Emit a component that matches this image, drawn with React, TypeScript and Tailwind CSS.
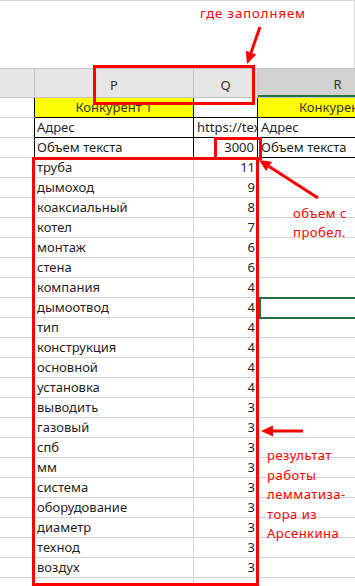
import React from 'react';

const words: [string, number][] = [
  ['труба', 11],
  ['дымоход', 9],
  ['коаксиальный', 8],
  ['котел', 7],
  ['монтаж', 6],
  ['стена', 6],
  ['компания', 4],
  ['дымоотвод', 4],
  ['тип', 4],
  ['конструкция', 4],
  ['основной', 4],
  ['установка', 4],
  ['выводить', 3],
  ['газовый', 3],
  ['спб', 3],
  ['мм', 3],
  ['система', 3],
  ['оборудование', 3],
  ['диаметр', 3],
  ['технод', 3],
  ['воздух', 3],
];

function Arrow({ x1, y1, x2, y2 }: { x1: number; y1: number; x2: number; y2: number }) {
  const dx = x2 - x1;
  const dy = y2 - y1;
  const len = Math.hypot(dx, dy);
  const ux = dx / len;
  const uy = dy / len;
  const bx = x2 - ux * 12;
  const by = y2 - uy * 12;
  const px = -uy * 5.5;
  const py = ux * 5.5;
  return (
    <g>
      <line x1={x1} y1={y1} x2={bx} y2={by} stroke="#ff0000" strokeWidth={3} />
      <polygon points={`${x2},${y2} ${bx + px},${by + py} ${bx - px},${by - py}`} fill="#ff0000" />
    </g>
  );
}

export default function App() {
  return (
    <div
      className="relative w-[355px] h-[586px] overflow-hidden bg-white text-[13px] text-[#1f1f1f]"
      style={{ fontFamily: '"Noto Sans", "Open Sans", sans-serif' }}
    >
      {/* верхняя область над заголовками */}
      <div className="h-[68px] border-t border-r border-[#d9d9d9] bg-[#fefefe]" />

      {/* заголовки столбцов */}
      <div className="flex h-[30px] border-t border-b border-[#c4c4c4] bg-[#e6e6e6] text-[#333]">
        <div className="w-[35px] shrink-0 border-r border-[#c4c4c4]" />
        <div className="w-[159px] shrink-0 border-r border-[#c4c4c4] flex items-end justify-center pb-[2px]">P</div>
        <div className="w-[64px] shrink-0 border-r border-[#c4c4c4] flex items-end justify-center pb-[2px]">Q</div>
        <div className="w-[159px] shrink-0 bg-[#d2d2d2] border-b-2 border-[#217346] flex items-end justify-center pb-[1px]">R</div>
      </div>

      {/* шапка конкурентов */}
      <div className="flex h-[20px]">
        <div className="w-[35px] shrink-0 border-b border-[#d4d4d4] border-r border-r-black" />
        <div className="w-[159px] shrink-0 bg-[#ffff00] border-b border-r border-black flex items-center justify-center text-[#333] leading-none">
          Конкурент 1
        </div>
        <div className="w-[64px] shrink-0 border-b border-r border-black" />
        <div className="w-[159px] shrink-0 bg-[#ffff00] border-b border-black flex items-center justify-center text-[#333] leading-none whitespace-nowrap">
          Конкурент 2
        </div>
      </div>
      <div className="flex h-[20px]">
        <div className="w-[35px] shrink-0 border-b border-[#d4d4d4] border-r border-r-black" />
        <div className="w-[159px] shrink-0 border-b border-r border-black flex items-center pl-[2px] leading-none">Адрес</div>
        <div className="w-[64px] shrink-0 border-b border-r border-black flex items-center pl-[3px] leading-none overflow-hidden whitespace-nowrap">
          https://texnod.ru
        </div>
        <div className="w-[159px] shrink-0 border-b border-black flex items-center pl-[3px] leading-none">Адрес</div>
      </div>
      <div className="flex h-[20px]">
        <div className="w-[35px] shrink-0 border-b border-[#d4d4d4] border-r border-r-black" />
        <div className="w-[159px] shrink-0 border-b border-r border-black flex items-center pl-[2px] leading-none">Объем текста</div>
        <div className="w-[64px] shrink-0 border-b border-r border-black flex items-center justify-end pr-[3px] leading-none">3000</div>
        <div className="w-[159px] shrink-0 border-b border-black flex items-center pl-[3px] leading-none whitespace-nowrap">Объем текста</div>
      </div>

      {/* список слов */}
      {[...words, ['', 0] as [string, number]].map(([w, n], i) => (
        <div key={i} className="flex h-[20px]">
          <div className="w-[35px] shrink-0 border-b border-r border-[#d4d4d4]" />
          <div className="w-[159px] shrink-0 border-b border-r border-[#d4d4d4] flex items-center pl-[2px] leading-none">{w}</div>
          <div className="w-[64px] shrink-0 border-b border-r border-[#d4d4d4] flex items-center justify-end pr-[2px] leading-none">
            {n ? n : ''}
          </div>
          <div className="w-[159px] shrink-0 border-b border-[#d4d4d4]" />
        </div>
      ))}

      {/* выделенная ячейка */}
      <div className="absolute left-[259px] top-[297px] w-[110px] h-[22px] border-2 border-[#217346]" />

      {/* пометки */}
      <div className="absolute left-[93px] top-[65px] w-[162px] h-[40px] border-[3px] border-[#ff0000]" />
      <div className="absolute left-[214px] top-[137px] w-[48px] h-[23px] border-[3px] border-[#ff0000]" />
      <div className="absolute left-[32px] top-[157px] w-[227px] h-[429px] border-[3px] border-[#ff0000]" />

      <div className="absolute left-[200px] top-[4px] text-[#ff0000] tracking-[1px] leading-[19px]">где заполняем</div>
      <div className="absolute left-[293px] top-[204px] text-[#ff0000] tracking-[0.5px] leading-[19px]">
        объем с<br />пробел.
      </div>
      <div className="absolute left-[267px] top-[446px] text-[#ff0000] tracking-[0.5px] leading-[19.5px]">
        результат<br />работы<br />лемматиза-<br />тора из<br />Арсенкина
      </div>

      <svg className="absolute inset-0 pointer-events-none" width={355} height={586}>
        <Arrow x1={260} y1={27} x2={247} y2={64} />
        <Arrow x1={318} y1={198} x2={259} y2={160} />
        <Arrow x1={303} y1={431} x2={261} y2={431} />
      </svg>
    </div>
  );
}
